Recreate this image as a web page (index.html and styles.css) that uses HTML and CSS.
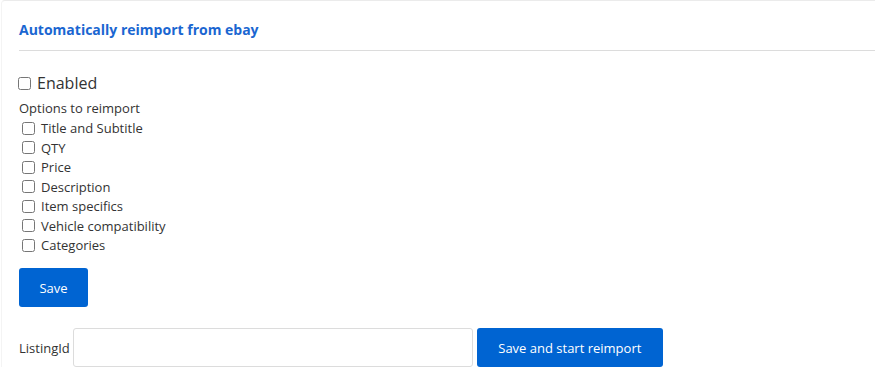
FILE: index.html
```html
<!DOCTYPE html>
<html lang="en">
<head>
    <meta charset="UTF-8">
    <meta name="viewport" content="width=device-width, initial-scale=1.0">
    <title>Reimport from ebay</title>
    <link rel="stylesheet" href="styles.css">
</head>
<body>
    <div class="card">
        <div class="card-header">
            <h3>Automatically reimport from ebay</h3>
        </div>
        <div class="card-body">
            <label class="enabled">
                <input type="checkbox" id="enabled"> Enabled
            </label>
            <div class="options-title">Options to reimport</div>
            <div class="options">
                <label class="option"><input type="checkbox"> Title and Subtitle</label>
                <label class="option"><input type="checkbox"> QTY</label>
                <label class="option"><input type="checkbox"> Price</label>
                <label class="option"><input type="checkbox"> Description</label>
                <label class="option"><input type="checkbox"> Item specifics</label>
                <label class="option"><input type="checkbox"> Vehicle compatibility</label>
                <label class="option"><input type="checkbox"> Categories</label>
            </div>
            <button type="button" class="btn save-btn">Save</button>
            <div class="listing-row">
                <label for="listingId">ListingId</label>
                <input type="text" id="listingId">
                <button type="button" class="btn reimport-btn">Save and start reimport</button>
            </div>
        </div>
    </div>
</body>
</html>
```

FILE: styles.css
```css
body {
    font-family: "Open Sans", Arial, sans-serif;
    margin: 0;
    padding: 0;
    background-color: #fff;
    color: #333;
}
.card {
    border-top: 1px solid #ebebeb;
    border-left: 1px solid #f4f4f4;
    border-top-left-radius: 4px;
    margin-left: 1px;
    padding-left: 17px;
}
.card-header {
    padding: 19px 0 10px;
    border-bottom: 1px solid #dcdcdc;
}
.card-header h3 {
    margin: 0;
    font-size: 14px;
    line-height: 20px;
    font-weight: 700;
    color: #1a66d1;
}
.card-body {
    padding-top: 20px;
}
.enabled {
    display: flex;
    align-items: center;
    height: 24px;
    font-size: 16px;
    color: #333;
}
.enabled input {
    margin: 0 6px 0 -1px;
    width: 13px;
    height: 13px;
}
.options-title {
    margin-top: 4px;
    font-size: 13px;
    line-height: 19.5px;
}
.options {
    display: flex;
    flex-direction: column;
}
.option {
    display: flex;
    align-items: center;
    height: 19.5px;
    font-size: 13px;
}
.option input {
    margin: 0 6px 0 3px;
    width: 13px;
    height: 13px;
}
.btn {
    font-family: inherit;
    font-size: 13px;
    color: #fff;
    background-color: #0064d2;
    border: none;
    border-radius: 3px;
    height: 39px;
    cursor: pointer;
}
.save-btn {
    margin-top: 13px;
    width: 69px;
    display: block;
}
.listing-row {
    display: flex;
    align-items: center;
    margin-top: 21px;
}
.listing-row label {
    font-size: 13px;
    margin-right: 3px;
}
.listing-row input {
    width: 400px;
    height: 39px;
    box-sizing: border-box;
    border: 1px solid #dcdcdc;
    border-radius: 3px;
    padding: 0 8px;
    font-family: inherit;
    font-size: 13px;
}
.reimport-btn {
    margin-left: 4px;
    width: 186px;
}
```
